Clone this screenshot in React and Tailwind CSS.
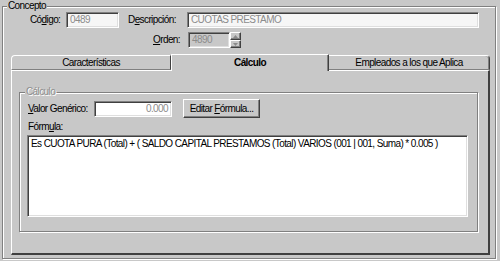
const sunken = 'border border-t-[#808080] border-l-[#808080] border-b-white border-r-white shadow-[inset_1px_1px_0_#404040,inset_-1px_-1px_0_#dfdfdf]';
const raised = 'border border-t-white border-l-white border-b-[#404040] border-r-[#404040] shadow-[inset_-1px_-1px_0_#808080]';
const etched = 'border border-[#808080] shadow-[inset_1px_1px_0_#fff,1px_1px_0_#fff]';

const Arrow = ({ up }) => (
    <svg width="5" height="3" viewBox="0 0 5 3" className="block">
        <path d={up ? 'M2.5 0 L5 3 L0 3 Z' : 'M0 0 L5 0 L2.5 3 Z'} fill="#8a8a8a" />
    </svg>
);

const App = () => {
    return (
        <div className="w-[500px] h-[261px] bg-[#c8c8c8] pt-[6px] pl-[2px] text-[10px] leading-[12px] tracking-[-0.6px] whitespace-nowrap text-black font-['Liberation_Sans',Arial,sans-serif] overflow-hidden">
            {/* Concepto */}
            <div className={`relative w-[494px] h-[253px] ${etched}`}>
                <span className="absolute -top-[7px] left-[4px] px-[1px] bg-[#c8c8c8]">Concepto</span>

                <div className="flex items-center mt-[5px] h-[16px]">
                    <div className="ml-[27px] w-[36px]">Có<span className="underline">d</span>igo:</div>
                    <div className={`w-[53px] h-[16px] bg-[#f6f6f6] text-[#8c8c8c] pl-[3px] flex items-center ${sunken}`}>0489</div>
                    <div className="w-[68px] pl-[9px]">D<span className="underline">e</span>scripción:</div>
                    <div className={`w-[292px] h-[16px] bg-[#f6f6f6] text-[#8c8c8c] pl-[3px] flex items-center ${sunken}`}>CUOTAS PRESTAMO</div>
                </div>

                <div className="flex items-center mt-[4px] h-[16px]">
                    <div className="ml-[150px] w-[35px]"><span className="underline">O</span>rden:</div>
                    <div className={`w-[42px] h-[16px] bg-[#c8c8c8] text-[#8c8c8c] pl-[3px] flex items-center ${sunken}`}>4890</div>
                    <div className="flex flex-col w-[11px] h-[16px]">
                        <div className={`flex-1 flex items-center justify-center bg-[#c8c8c8] ${raised}`}><Arrow up /></div>
                        <div className={`flex-1 flex items-center justify-center bg-[#c8c8c8] ${raised}`}><Arrow /></div>
                    </div>
                </div>

                {/* Tabs */}
                <div className="ml-[8px] mt-[6px] flex h-[16px] items-end">
                    <div className="w-[160px] h-[15px] flex items-center justify-center border-t border-l border-white border-r border-r-[#404040] border-b border-b-[#808080] rounded-tl-[4px]">
                        Características
                    </div>
                    <div className="relative z-10 w-[158px] h-[17px] -mb-[1px] bg-[#c8c8c8] flex items-center justify-center font-bold border-t border-l border-white border-r border-r-[#404040] shadow-[inset_-1px_0_0_#808080]">
                        Cálculo
                    </div>
                    <div className="w-[161px] h-[15px] flex items-center justify-center border-t border-t-white border-r border-r-[#404040] border-b border-b-[#808080] rounded-tr-[4px] shadow-[inset_-1px_0_0_#808080]">
                        Empleados a los que Aplica
                    </div>
                </div>

                {/* Panel */}
                <div className="ml-[8px] w-[479px] h-[185px] border-l border-t border-white border-r-2 border-b-2 border-r-[#404040] border-b-[#404040] pt-[21px] pl-[7px]">
                    <div className={`relative w-[459px] h-[140px] ${etched}`}>
                        <span className="absolute -top-[7px] left-[5px] px-[1px] bg-[#c8c8c8] text-[#8e8e8e] [text-shadow:1px_1px_0_#fff]">Cálculo</span>

                        <div className="flex items-center mt-[6px] h-[19px]">
                            <div className="ml-[8px] w-[66px]"><span className="underline">V</span>alor Genérico:</div>
                            <div className={`w-[78px] h-[16px] bg-white text-[#8c8c8c] pr-[3px] flex items-center justify-end ${sunken}`}>0.000</div>
                            <button className={`ml-[11px] w-[77px] h-[19px] bg-[#c8c8c8] flex items-center justify-center ${raised}`}>
                                Editar&nbsp;<span className="underline">F</span>órmula...
                            </button>
                        </div>

                        <div className="ml-[8px] mt-[3px] h-[13px]">Fórm<span className="underline">u</span>la:</div>

                        <div className={`ml-[7px] mt-[1px] w-[441px] h-[82px] bg-white px-[3px] pt-[2px] ${sunken}`}>
                            Es CUOTA PURA (Total) + ( SALDO CAPITAL PRESTAMOS (Total) VARIOS (001 | 001, Suma) * 0.005 )
                        </div>
                    </div>
                </div>
            </div>
        </div>
    );
};

export default App;
